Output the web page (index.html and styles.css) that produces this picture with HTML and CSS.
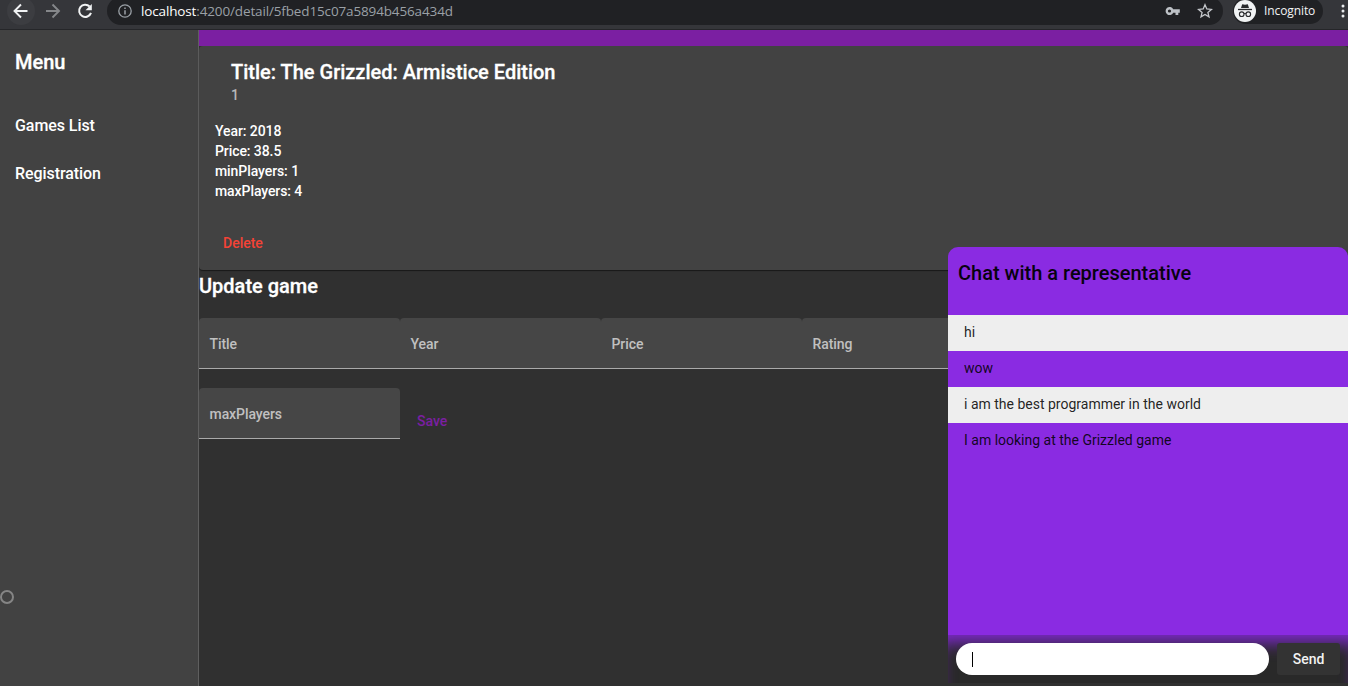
FILE: index.html
```html
<!DOCTYPE html>
<html lang="en">
<head>
<meta charset="utf-8">
<title>Game detail</title>
<link rel="stylesheet" href="styles.css">
</head>
<body>
<header class="browser">
  <div class="nav back"><svg width="28" height="28" viewBox="0 0 28 28"><path d="M20.500 14H8M14 7.500 7.500 14 14 20.500" fill="none" stroke="#f1f3f4" stroke-width="1.900"/></svg></div>
  <div class="nav forward"><svg width="28" height="28" viewBox="0 0 28 28"><path d="M7 14H20M13.500 7.500 20 14 13.500 20.500" fill="none" stroke="#85878a" stroke-width="1.900"/></svg></div>
  <div class="nav reload"><svg width="28" height="28" viewBox="0 0 28 28"><path d="M18.600 9.500A6.100 6.100 0 1 0 20 15.800" fill="none" stroke="#f1f3f4" stroke-width="2"/><path d="M20.800 7V13.200H14.500Z" fill="#f1f3f4"/></svg></div>
  <div class="omnibox">
    <svg class="info" width="14" height="14" viewBox="0 0 14 14"><circle cx="7" cy="7" r="6.200" fill="none" stroke="#9aa0a6" stroke-width="1.300"/><path d="M7 6.200V10.500M7 3.500V5" stroke="#9aa0a6" stroke-width="1.500"/></svg>
    <span class="url"><b>localhost</b>:4200/detail/5fbed15c07a5894b456a434d</span>
    <svg class="key" width="16" height="12" viewBox="0 0 16 12"><path fill="#bdc1c6" fill-rule="evenodd" d="M8.200 4.300A4 4 0 1 0 8.200 7.700H10.500V10H13.300V7.700H14.800V4.300ZM4.500 4.400A1.600 1.600 0 1 1 4.500 7.600A1.600 1.600 0 1 1 4.500 4.400Z"/></svg>
    <svg class="star" width="16" height="16" viewBox="0 0 16 16"><path d="M8 1.700 9.800 6 14.400 6.400 10.900 9.400 12 13.900 8 11.500 4 13.900 5.100 9.400 1.600 6.400 6.200 6Z" fill="none" stroke="#c5c8cc" stroke-width="1.300"/></svg>
  </div>
  <div class="profile">
    <svg width="22" height="22" viewBox="0 0 22 22"><circle cx="11" cy="11" r="11" fill="#f1f3f4"/><path d="M7 8 8.200 4.200 11 4.700 13.800 4.200 15 8Z" fill="#292a2d"/><path d="M4 9.500H18" stroke="#292a2d" stroke-width="1.300"/><g fill="none" stroke="#292a2d" stroke-width="1.100"><circle cx="7.700" cy="14.200" r="2.300"/><circle cx="14.300" cy="14.200" r="2.300"/><path d="M10 13.800Q11 13.200 12 13.800"/></g></svg>
    <span>Incognito</span>
  </div>
  <svg class="dots" width="4" height="16" viewBox="0 0 4 16" fill="#e8eaed"><circle cx="2" cy="3" r="1.500"/><circle cx="2" cy="8" r="1.500"/><circle cx="2" cy="13" r="1.500"/></svg>
</header>
<div class="app">
  <nav class="sidebar">
    <h1>Menu</h1>
    <a>Games List</a>
    <a>Registration</a>
    <span class="ring"></span>
  </nav>
  <main class="content">
    <div class="toolbar"></div>
    <section class="card">
      <h2 class="game-title">Title: The Grizzled: Armistice Edition</h2>
      <p class="rank">1</p>
      <div class="facts">
        <p>Year: 2018</p>
        <p>Price: 38.5</p>
        <p>minPlayers: 1</p>
        <p>maxPlayers: 4</p>
      </div>
      <span class="delete">Delete</span>
    </section>
    <h2 class="update">Update game</h2>
    <form class="fields">
      <label class="field">Title</label>
      <label class="field">Year</label>
      <label class="field">Price</label>
      <label class="field">Rating</label>
      <label class="field"></label>
      <label class="field">maxPlayers</label>
      <span class="save">Save</span>
    </form>
  </main>
</div>
<aside class="chat">
  <h2>Chat with a representative</h2>
  <ul class="messages">
    <li>hi</li>
    <li>wow</li>
    <li>i am the best programmer in the world</li>
    <li>I am looking at the Grizzled game</li>
  </ul>
  <div class="composer">
    <div class="entry"><i class="caret"></i></div>
    <button class="send">Send</button>
  </div>
</aside>
</body>
</html>
```
FILE: styles.css
```css
* { box-sizing: border-box; }
body, h1, h2, p, ul { margin: 0; padding: 0; }
body {
  position: relative;
  width: 1348px;
  height: 686px;
  overflow: hidden;
  background: #303030;
  color: #fff;
  font: 500 14px/20px Roboto, sans-serif;
  white-space: nowrap;
}
svg { display: block; flex: none; }

.browser {
  display: flex;
  align-items: flex-start;
  height: 30px;
  overflow: hidden;
  background: #35363a;
  border-bottom: 1px solid #252629;
}
.nav { width: 28px; height: 28px; margin-top: -3px; border-radius: 50%; }
.back { margin-left: 7px; background: #3c3d41; }
.forward { margin-left: 4px; }
.reload { margin-left: 4px; }
.omnibox {
  display: flex;
  align-items: center;
  width: 1116px;
  height: 28px;
  margin: -3px 0 0 8px;
  padding: 0 10px 0 11px;
  border-radius: 14px;
  background: #202124;
}
.url {
  margin-left: 9px;
  color: #9aa0a6;
  font: 400 13.5px/20px "Open Sans", sans-serif;
  letter-spacing: -.14px;
}
.url b { color: #fff; font-weight: 400; }
.key { margin-left: auto; }
.star { margin-left: 16px; }
.profile {
  display: flex;
  align-items: center;
  width: 90px;
  height: 26px;
  margin: -2px 0 0 10px;
  padding-left: 1px;
  border-radius: 13px;
  background: #202124;
}
.profile span {
  margin-left: 8px;
  color: #f1f3f4;
  font: 400 12px/20px "Open Sans", sans-serif;
  letter-spacing: -.1px;
}
.dots { margin: 3px 0 0 18px; }

.app { display: grid; grid-template-columns: 199px 1fr; height: 656px; }
.sidebar {
  display: flex;
  flex-direction: column;
  padding: 16px 0 0 15px;
  background: #424242;
  border-right: 1px solid #5f5f5f;
}
.sidebar h1 { margin-bottom: 24px; font: 500 20px/32px Roboto, sans-serif; -webkit-text-stroke: .3px; }
.sidebar a { font-size: 16px; line-height: 48px; letter-spacing: -.07px; }
.ring {
  width: 14px;
  height: 14px;
  margin: auto 0 82px -15px;
  border: 2px solid #858585;
  border-radius: 50%;
}

.content { min-width: 0; }
.toolbar { height: 16px; background: #7b1fa2; }
.card {
  height: 224px;
  padding: 10px 16px 0;
  border-radius: 4px;
  background: #424242;
  box-shadow: 0 1px 1px rgba(0, 0, 0, .35), 0 2px 1px -1px rgba(0, 0, 0, .2);
}
.game-title { padding-left: 16px; font: 500 20px/32px Roboto, sans-serif; -webkit-text-stroke: .3px; }
.rank { padding-left: 16px; line-height: 15px; color: #b8b8b8; }
.facts { margin-top: 18px; letter-spacing: -.08px; }
.delete { display: block; margin: 24px 0 0 8px; line-height: 36px; color: #f44336; }
.update { font: 500 20px/32px Roboto, sans-serif; -webkit-text-stroke: .3px; }
.fields {
  display: grid;
  grid-template-columns: repeat(5, 201px);
  grid-auto-rows: 51px;
  row-gap: 19px;
  padding-top: 16px;
}
.field {
  height: 51px;
  padding-left: 10.5px;
  border-bottom: 1px solid #aaa;
  border-radius: 4px 4px 0 0;
  background: #464646;
  color: #c0c0c0;
  line-height: 52px;
  letter-spacing: -.07px;
}
.save { padding: 15px 0 0 17px; line-height: 36px; color: #7b1fa2; }

.chat {
  position: absolute;
  left: 948px;
  top: 247px;
  width: 400px;
  height: 436px;
  display: flex;
  flex-direction: column;
  border-radius: 10px 10px 0 0;
  background: #8a2be2;
  color: #111;
}
.chat h2 { height: 68px; padding: 10px 10px 0; font: 500 20px/32px Roboto, sans-serif; color: #080210; }
.messages { flex: 1; list-style: none; }
.messages li { height: 36px; padding: 0 16px; font-weight: 400; line-height: 34px; color: rgba(0, 0, 0, .87); }
.messages li:nth-child(odd) { background: #eee; }
.composer {
  display: flex;
  gap: 8px;
  height: 48px;
  padding: 8px;
  background: #292929;
  box-shadow: inset 0 16px 16px -8px #7d29cb;
}
.entry { flex: 1; padding: 9px 0 0 16px; border-radius: 16px; background: #fff; }
.caret { display: block; width: 1px; height: 15px; background: #000; }
.send {
  width: 63px;
  padding: 0;
  border: 0;
  border-radius: 3px;
  background: #333;
  color: #f2f2f2;
  font: 500 14px/32px Roboto, sans-serif;
}
```
